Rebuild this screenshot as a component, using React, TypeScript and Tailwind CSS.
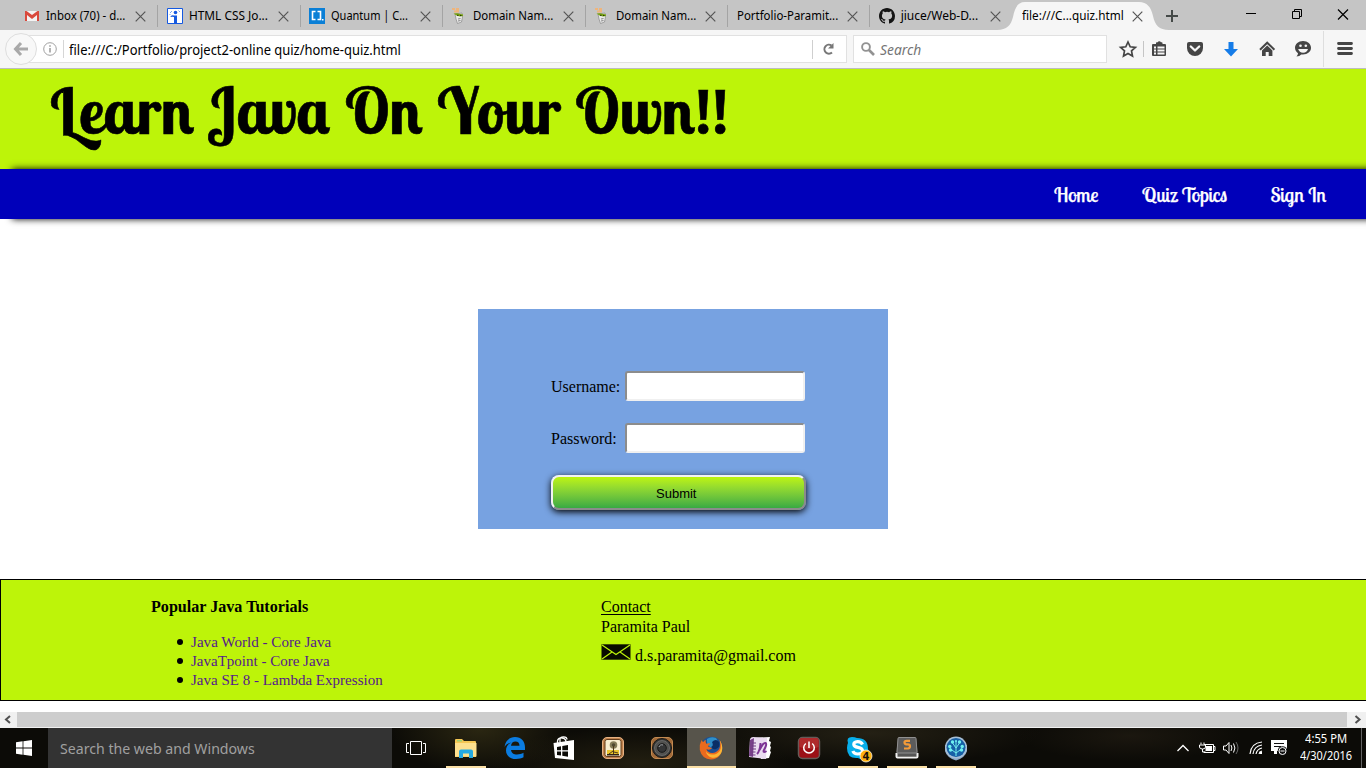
import { useLayoutEffect, useRef, useState } from "react";
import type { ReactNode } from "react";

/* Text squeezed or stretched to a set width. */
function Fit({ w, className = "", children }: { w: number; className?: string; children: ReactNode }) {
  const ref = useRef<HTMLSpanElement>(null);
  const [scale, setScale] = useState(1);
  useLayoutEffect(() => {
    if (ref.current) setScale(w / ref.current.offsetWidth);
  }, [w]);
  return (
    <span className="block shrink-0" style={{ width: w }}>
      <span
        ref={ref}
        className={`inline-block whitespace-nowrap ${className}`}
        style={{ transformOrigin: "0 75%", transform: `scaleX(${scale})` }}
      >
        {children}
      </span>
    </span>
  );
}

function Close({ className = "" }: { className?: string }) {
  return (
    <svg width="11" height="11" viewBox="0 0 11 11" className={`shrink-0 ${className}`}>
      <path d="M.7.7l9.6 9.6M10.3.7L.7 10.3" stroke="#555" strokeWidth="1.2" fill="none" />
    </svg>
  );
}

const Gmail = () => (
  <svg width="16" height="16" viewBox="0 0 16 16">
    <path d="M1 3h14v10H1z" fill="#f3f3f3" />
    <path d="M1 13V3.5L8 9l7-5.500V13h-2V7L8 11 3 7v6z" fill="#d94a3d" />
    <path d="M1 3h1.500L8 7l5.500-4H15v1.500L8 10 1 4.500z" fill="#d94a3d" />
  </svg>
);
const InfoFav = () => (
  <svg width="16" height="16" viewBox="0 0 16 16">
    <path d="M.5.5h15v15H.5z" fill="#fff" stroke="#1559e0" />
    <circle cx="8.500" cy="4.500" r="1.800" fill="#1559e0" />
    <path d="M3.500 8.500Q5 6.500 7 7.500h3V15H7V9Q5.500 8.500 3.500 9z" fill="#1559e0" />
    <path d="M3 5l2-2M11.500 2.500l1.500 1.500M2.500 7l1-1" stroke="#7aa6f5" />
  </svg>
);
const Brackets = () => (
  <svg width="16" height="16" viewBox="0 0 16 16">
    <path d="M0 0h16v16H0z" fill="#0a7fd6" />
    <path d="M6.500 3.500h-3v8h3M8.500 3.500h3v8h-3" fill="none" stroke="#fff" strokeWidth="1.600" />
    <path d="M13 11h1.500v1.500H13z" fill="#fff" />
  </svg>
);
const Chef = () => (
  <svg width="16" height="16" viewBox="0 0 16 16">
    <path d="M1 0h3v2H1zM5 0h3v3H5zM3 2.500h5v2H3z" fill="#efb57c" />
    <path d="M4 6l7-1 .5 4-1 5-4 1.500L5 11z" fill="#e9e9e9" stroke="#888" strokeWidth=".7" />
    <path d="M2.500 5.500L6 5.200l6 1.300v1.600l-3 .5-3.500-1z" fill="#79a511" />
    <path d="M6 7.300h1.500M9 7.500h1.500" stroke="#263805" />
    <path d="M7 11l2.500-.5M7 13l2.500-.5" stroke="#888" />
  </svg>
);
const Github = () => (
  <svg width="16" height="16" viewBox="0 0 16 16">
    <path
      fill="#141414"
      d="M8 0C3.580 0 0 3.580 0 8c0 3.540 2.290 6.530 5.470 7.590.4.070.55-.17.55-.38 0-.19-.01-.82-.01-1.490-2.010.37-2.530-.49-2.690-.94-.09-.23-.48-.94-.82-1.130-.28-.15-.68-.52-.01-.53.63-.01 1.080.58 1.230.82.72 1.210 1.870.87 2.330.66.070-.52.28-.87.51-1.070-1.780-.2-3.640-.89-3.640-3.950 0-.87.31-1.590.82-2.150-.08-.2-.36-1.020.08-2.120 0 0 .67-.21 2.200.82a7.600 7.600 0 0 1 4 0c1.530-1.040 2.200-.82 2.200-.82.44 1.100.16 1.920.08 2.120.51.56.82 1.270.82 2.150 0 3.070-1.870 3.750-3.650 3.950.29.25.54.73.54 1.480 0 1.070-.01 1.930-.01 2.200 0 .21.15.46.55.38A8 8 0 0 0 16 8c0-4.420-3.580-8-8-8z"
    />
  </svg>
);

const tabs: { icon: ReactNode; text: string; w: number }[] = [
  { icon: <Gmail />, text: "Inbox (70) - d...", w: 79 },
  { icon: <InfoFav />, text: "HTML CSS Jo...", w: 79 },
  { icon: <Brackets />, text: "Quantum | C...", w: 77 },
  { icon: <Chef />, text: "Domain Nam...", w: 80 },
  { icon: <Chef />, text: "Domain Nam...", w: 80 },
  { icon: null, text: "Portfolio-Paramit...", w: 101 },
  { icon: <Github />, text: "jiuce/Web-D...", w: 77 },
];

function TabBar() {
  return (
    <div className="flex h-[30px] bg-[#c5c5c5] pl-[15px] text-[12px] text-black">
      {tabs.map((t, i) => (
        <div key={i} className="flex w-[142.4px] shrink-0 items-center">
          <div className={t.icon ? "ml-[9.3px] mr-[6px] mt-[2px] w-4 shrink-0" : "ml-[10px]"}>{t.icon}</div>
          <Fit w={t.w} className="mt-px leading-[30px]">{t.text}</Fit>
          <Close className="ml-auto mr-[11px] mt-[2px]" />
          {i < 6 && <div className="-mr-px mt-[2px] h-[22px] w-px bg-[#a4a4a4]" />}
        </div>
      ))}
      <div className="-ml-[15px] grid w-[173px] shrink-0">
        <svg width="173" height="30" className="col-start-1 row-start-1">
          <path d="M0 30C10 30 14 25 16 17C18 7 21 2 28 2H142C150 2 154 7 156 16C158 25 162 30 172 30z" fill="#f6f6f6" />
        </svg>
        <div className="z-10 col-start-1 row-start-1 flex items-center pl-[25px]">
          <Fit w={102} className="mt-px leading-[30px]">file:///C...quiz.html</Fit>
          <Close className="ml-[8px] mt-px" />
        </div>
      </div>
      <svg width="196" height="30" viewBox="1170 0 196 30" overflow="visible" className="-ml-[1px]">
        <path d="M1167 16h12M1173 10v12" stroke="#454a48" strokeWidth="2" />
        <path d="M1247 13.500h10" stroke="#000" />
        <path d="M1293.500 11.500h7v7h-7zM1295.500 11.500v-2h7v7h-2" stroke="#000" fill="none" />
        <path d="M1339 9.500l10 10M1349 9.500l-10 10" stroke="#000" strokeWidth="1.200" />
      </svg>
    </div>
  );
}

function Toolbar() {
  return (
    <div className="flex h-[39px] items-start border-b border-[#bdbdbd] bg-[#f6f6f6] pl-[5px] pt-[3px]">
      <div className="z-10 flex size-8 shrink-0 items-center justify-center rounded-full border border-[#dedede] bg-[#f8f8f8]">
        <svg width="16" height="16" viewBox="0 0 16 16">
          <path d="M8 2L2.500 8 8 14M3 8h12" stroke="#a9a9a9" strokeWidth="3" fill="none" />
        </svg>
      </div>
      <div className="-ml-[16px] mt-[2px] flex h-[28px] w-[826px] shrink-0 items-center border border-[#e1e1e1] bg-white pl-[21px]">
        <svg width="14" height="14" viewBox="0 0 14 14">
          <circle cx="7" cy="7" r="6.300" fill="none" stroke="#a0a0a0" />
          <path d="M7 6v4.500M7 3.300v1.400" stroke="#929292" strokeWidth="1.400" />
        </svg>
        <div className="ml-[6px] mr-[5px] h-[18px] w-px bg-[#d6d6d6]" />
        <Fit w={332} className="mt-[2px] text-[14px] leading-7 text-black">file:///C:/Portfolio/project2-online quiz/home-quiz.html</Fit>
        <div className="ml-auto h-[19px] w-px bg-[#cfcfcf]" />
        <svg width="33" height="20" viewBox="1 0 33 20">
          <path d="M20 13.500A4.500 4.500 0 1 1 19.500 6.500" stroke="#777" strokeWidth="2" fill="none" />
          <path d="M21.500 4v5.500H16z" fill="#777" />
        </svg>
      </div>
      <div className="ml-[6px] mt-[2px] flex h-[28px] w-[254px] shrink-0 items-center border border-[#e1e1e1] bg-white pl-[7px]">
        <svg width="14" height="14" viewBox="0 0 14 14" className="-mt-px">
          <circle cx="5" cy="5" r="3.900" fill="none" stroke="#929292" strokeWidth="1.900" />
          <path d="M8 8l5 5" stroke="#929292" strokeWidth="2.600" />
        </svg>
        <Fit w={41} className="ml-[5px] mt-[2px] text-[13.500px] italic leading-7 text-[#757575]">Search</Fit>
      </div>
      <svg width="259" height="38" viewBox="1107 30 259 38" className="-mt-[3px] shrink-0">
        <path d="M1128 42l2.200 4.800 5.200.6-3.900 3.500 1 5.200-4.500-2.600-4.500 2.600 1-5.200-3.900-3.500 5.200-.6z" fill="none" stroke="#454545" strokeWidth="1.700" />
        <path d="M1143.500 41v16" stroke="#c5c5c5" />
        <path d="M1153 44h3v-1q0-.7.7-.7h1a1.700 1.700 0 0 1 3.200 0h.9q.7 0 .7.700v1h2.500q1 0 1 1v10q0 1-1 1h-12q-1 0-1-1V45q0-1 1-1z" fill="#454545" />
        <path d="M1154 46.500h2v2h-2zM1157.500 46.500h7v2h-7zM1154 49.500h2v2h-2zM1157.500 49.500h7v2h-7zM1154 52.500h2v2h-2zM1157.500 52.500h7v2h-7z" fill="#f6f6f6" />
        <path d="M1189 42h12q2 0 2 2v4a8 8 0 0 1-16 0v-4q0-2 2-2z" fill="#454545" />
        <path d="M1190.800 46.500l4.200 4 4.200-4" fill="none" stroke="#f6f6f6" strokeWidth="2.300" strokeLinecap="round" strokeLinejoin="round" />
        <path d="M1228.500 42h5v7h4.500l-7 7.500-7-7.500h4.500z" fill="#157ce8" />
        <path d="M1260 49.700l7.200-7 7.200 7" fill="none" stroke="#454545" strokeWidth="2" />
        <path d="M1262 50.500l5.200-5 5.200 5V56h-3.700v-4h-3v4H1262z" fill="#454545" />
        <path d="M1303 41c4.800 0 8 3 8 6.800s-3.400 6.700-8 6.700l-1.700-.1q-1.800 1.900-4.800 2 1.600-1.600 1.500-3.200c-2-1.300-3-3.200-3-5.400 0-3.800 3.400-6.800 8-6.800z" fill="#454545" />
        <path d="M1298.200 49h9.800q-1 3.700-4.900 3.700t-4.900-3.700z" fill="#f6f6f6" />
        <circle cx="1300.500" cy="45.800" r="1.300" fill="#f6f6f6" />
        <circle cx="1305.800" cy="45.800" r="1.300" fill="#f6f6f6" />
        <path d="M1323.500 31v36" stroke="#dedede" />
        <path d="M1338.500 43.500h13M1338.500 48.500h13M1338.500 53.500h13" stroke="#454545" strokeWidth="2.800" strokeLinecap="round" />
      </svg>
    </div>
  );
}

function Header() {
  return (
    <header className="h-[100px] bg-[#bdf409] pl-[50px]">
      <h1 className="text-[64px] font-bold leading-[82px] text-black [-webkit-text-stroke:0.6px_#000] [font-family:'Lobster_Two',Lobster,serif] [word-spacing:1px]">
        <Fit w={679}>Learn Java On Your Own!!</Fit>
      </h1>
    </header>
  );
}

function Nav() {
  return (
    <nav className="z-10 flex h-[50px] justify-end gap-[43.5px] bg-[#0000ba] pr-[39.5px] text-[20px] leading-[52px] text-white shadow-[12px_0_7px_#000] [-webkit-text-stroke:0.25px_#fff] [font-family:'Lobster_Two',Lobster,serif]">
      <Fit w={44.5}>Home</Fit>
      <Fit w={85}>Quiz Topics</Fit>
      <Fit w={56}>Sign In</Fit>
    </nav>
  );
}

function Field({ label, w }: { label: string; w: number }) {
  return (
    <label className="mb-[22px] flex h-[30px]">
      <span className="w-[74px] shrink-0">
        <Fit w={w} className="leading-[32px]">{label}</Fit>
      </span>
      <input className="h-[30px] w-[180px] rounded-[3px] border-2 border-b-[#f0f0f0] border-l-[#8c8c8c] border-r-[#f0f0f0] border-t-[#8c8c8c] bg-white outline-none" />
    </label>
  );
}

function Login() {
  return (
    <form className="mx-auto mt-[90px] h-[220px] w-[410px] shrink-0 bg-[#77a2e1] pl-[73px] pt-[62px] text-[16px] text-black [font-family:'Liberation_Serif',serif]">
      <Field label="Username:" w={69} />
      <Field label="Password:" w={66} />
      <button
        type="button"
        className="flex h-[35px] w-[255px] items-center justify-center rounded-[8px] border-2 border-b-[#8b8b8b] border-l-[#f2f2f2] border-r-[#8b8b8b] border-t-[#f2f2f2] bg-linear-to-b from-[#bdf409] to-[#37aa42] pr-[6px] pt-[2px] text-[13.33px] shadow-[0_2px_7px_#000] [font-family:'Liberation_Sans',sans-serif]"
      >
        <Fit w={40}>Submit</Fit>
      </button>
    </form>
  );
}

function Footer() {
  const links: [string, number][] = [["Java World - Core Java", 140], ["JavaTpoint - Core Java", 139], ["Java SE 8 - Lambda Expression", 191.5]];
  return (
    <footer className="mt-[50px] flex h-[122px] shrink-0 border-y border-l border-black bg-[#bdf409] pl-[150px] pt-[17px] text-[16px] leading-5 text-black [font-family:'Liberation_Serif',serif]">
      <section className="w-[450px]">
        <h2 className="font-bold"><Fit w={157}>Popular Java Tutorials</Fit></h2>
        <ul className="mt-[15px] text-[#551a8b]">
          {links.map(([t, w]) => (
            <li key={t} className="flex h-[19px] items-center">
              <span className="ml-[26px] mr-[8px] size-[6px] rounded-full bg-black" />
              <Fit w={w} className="text-[15px] leading-[19px]">{t}</Fit>
            </li>
          ))}
        </ul>
      </section>
      <section>
        <div><Fit w={50} className="underline decoration-1 underline-offset-2">Contact</Fit></div>
        <div><Fit w={89}>Paramita Paul</Fit></div>
        <div className="flex pt-[7px]">
          <svg width="30" height="16" viewBox="0 0 30 16" className="mr-[4px]">
            <path d="M.5.300h29v15.400H.5z" fill="#080c00" />
            <path d="M1 1l14 9.500L29 1M1 15l10-7M29 15L19 8" fill="none" stroke="#bdf409" strokeWidth="1.200" />
          </svg>
          <Fit w={161} className="mt-[2px]">d.s.paramita@gmail.com</Fit>
        </div>
      </section>
    </footer>
  );
}

function Scrollbar() {
  return (
    <div className="flex h-[16px] shrink-0 items-stretch justify-between border-b border-[#f0f0f0] bg-[#f0f0f0]">
      <svg width="17" height="15"><path d="M10 4L6 7.500l4 3.500" fill="none" stroke="#505050" strokeWidth="2" /></svg>
      <div className="flex-1 bg-[#cdcdcd]" />
      <svg width="19" height="15"><path d="M8.500 4l4 3.500-4 3.500" fill="none" stroke="#505050" strokeWidth="2" /></svg>
    </div>
  );
}

const apps: { on?: boolean; active?: boolean; art: ReactNode }[] = [
  {
    on: true,
    art: (
      <>
        <path d="M1 4q0-1 1-1h6l2 2h11q1 0 1 1v15H1z" fill="#f5c754" />
        <path d="M1 7h21.500v13.500H1z" fill="#fde08e" />
        <path d="M3 4h5v1.500H3z" fill="#9ed173" />
        <path d="M5 22v-6.500q0-2 2-2h10q2 0 2 2V22h-4v-4.500H9V22z" fill="#25a9e0" />
      </>
    ),
  },
  {
    art: (
      <path d="M1.500 11C2.500 4.500 6.500 1 12 1c6.500 0 10 4.500 10 10.500V14H8c.3 3.200 3 4.500 6 4.500 2.500 0 4.700-.6 6.500-1.700v4.500C18.500 22.400 16 23 13 23 7 23 3 19.500 3 14.500c0-3.800 2-6.600 5.500-8C5.500 7 3 8.500 1.500 11zM8 9.800h8.500C16.500 7 15 5.500 12.500 5.500S8.300 7 8 9.800z" fill="#0b7ce0" />
    ),
  },
  {
    art: (
      <>
        <path d="M8 6V3.500Q8 .8 11.500.8T15 3.500M5.500 7V5Q6 1.500 10 2t4 4" fill="none" stroke="#fff" strokeWidth="1.300" />
        <path d="M1.500 7L22 4v20L3 22z" fill="#fff" />
        <path d="M5 11l4-.7v4H5zM10.300 10l5.700-1v5.300h-5.700zM5 15.500h4v4l-4-.6zM10.300 15.500H16v5.300l-5.700-1z" fill="#0a0a06" />
      </>
    ),
  },
  {
    art: (
      <>
        <rect x="1.500" y="1.500" width="21" height="21" rx="4.500" fill="#bd814c" stroke="#e7b284" />
        <rect x="4" y="3.500" width="16" height="17" rx="2" fill="#f8efd1" stroke="#633c1d" />
        <path d="M6 14h12v5H6z" fill="#e9c52b" />
        <circle cx="12.500" cy="9" r="3.800" fill="#857d58" />
        <circle cx="12.500" cy="9" r="1.800" fill="#4f4a30" />
        <path d="M12.500 10v9M8 18l4-3M17 17l-4-1" stroke="#4e3919" strokeWidth="1" />
        <path d="M6 18h12v1.500H6z" fill="#322312" />
      </>
    ),
  },
  {
    art: (
      <>
        <rect x="1.500" y="1.500" width="21" height="21" rx="4.500" fill="#a26a38" stroke="#c28a52" />
        <circle cx="12" cy="12" r="9.500" fill="#353533" stroke="#1a1917" />
        <circle cx="12" cy="12" r="7.500" fill="#51514f" stroke="#777" strokeWidth=".7" />
        <circle cx="12" cy="12" r="4.300" fill="#343536" stroke="#181818" />
        <path d="M9 11a3 3 0 0 1 4-2" stroke="#a2a6aa" fill="none" />
      </>
    ),
  },
  {
    on: true,
    active: true,
    art: (
      <>
        <circle cx="12.500" cy="11.500" r="10.800" fill="#1c4f93" />
        <path d="M8 3q4-3 9-1 3 4 1 8-3 4-7 1-4-3-3-8z" fill="#2f8fc9" />
        <path d="M13 6q4-4 7 0 2 5-3 7-3 1-5-2 3-1 1-5z" fill="#0a2f66" />
        <path d="M2.500 4Q0 9 .8 14 3 23 12 23.500c7 0 11-5.500 11.200-11.500.1-3-1-6-2.700-8 1.500 5 .5 10-3.500 12-4 2-9 .5-9.500-3 2 1.500 4.500.5 5.500-1-2-.3-2.500-1.500-4-1.500.3-1.500 1.500-2 2.500-2.800-2-.7-3-.2-4 0-.8-1-1-2.500-.7-4Q5 4.500 4.300 6 3 5.500 2.500 4z" fill="#ea6a1e" />
        <path d="M20.500 4c3 6 1.500 12-3.500 14-5 1.500-9 0-10-3 0 4 4 7 8 6.800 6-.8 8.700-5.800 8.200-10.800-.3-3-1.200-5-2.700-7z" fill="#fbb634" />
      </>
    ),
  },
  {
    art: (
      <>
        <path d="M5 2l17-1-1 4 2 1-1 4 1 1-1 4 1 1-2 6-8 1z" fill="#fff" />
        <path d="M2 3q1-2 3-2l14 1-1 21-17-2z" fill="#eadcf0" />
        <path d="M2 4l4-2-1 19-4-1z" fill="#78408a" />
        <path d="M4 7h4M4 10h4M4 13h4M3.500 16h4M3.500 19h4" stroke="#6d3a80" />
        <path d="M9 18q3-3 3.500-11M11.500 14q4-8 6-7t-2 8q0 2 3 0" fill="none" stroke="#7d3595" strokeWidth="2" />
      </>
    ),
  },
  {
    art: (
      <>
        <rect x="1.500" y="1.500" width="21" height="21" rx="4" fill="#9c1016" stroke="#655b57" strokeWidth="1.500" />
        <path d="M2.500 4q0-2 2-2h15q2 0 2 2v7q-9 4-19 0z" fill="#ae2a2c" />
        <path d="M8.800 7.500a5.300 5.300 0 1 0 6.400 0M12 5.500v6.500" fill="none" stroke="#fff" strokeWidth="1.500" />
      </>
    ),
  },
  {
    on: true,
    art: (
      <>
        <path d="M2 7Q0 1 6 1q3 0 5 1 11 0 11 11 3 10-6 10-3 0-4-1Q1 23 1 12q0-3 1-5z" fill="#08aeea" />
        <path d="M16.500 8.500Q15 5.500 11.500 5.700 7.500 6 7.800 8.500 8 10.700 12 11.300q4.500.7 4.500 3.500 0 3-4.700 3.200Q8 18 6.800 15" fill="none" stroke="#fff" strokeWidth="3.200" />
        <circle cx="20" cy="20" r="6" fill="#ffb10f" stroke="#fff" strokeWidth=".7" />
        <text x="20" y="23.500" textAnchor="middle" fontSize="10" fontWeight="700" fontFamily="DejaVu Sans" fill="#17100a">4</text>
      </>
    ),
  },
  {
    on: true,
    art: (
      <>
        <path d="M3 2h18l2 18H1z" fill="#555" />
        <path d="M1.500 17v3.500q0 1 1 1h19q1 0 1-1V17" fill="none" stroke="#f1f1f1" strokeWidth="2" />
        <path d="M4 1.500h16q1 0 1 1L22 16q0 1-1 1H3q-1 0-1-1l1-13.500q0-1 1-1z" fill="#5c5c5c" stroke="#909090" />
        <path d="M15 4.800h-3.500q-2 0-2 1.700t2 1.800H13q2 0 2 2t-2 2.200H9" fill="none" stroke="#f39b38" strokeWidth="2.200" />
      </>
    ),
  },
  {
    on: true,
    art: (
      <>
        <path d="M1 9h22v6q-2 7-11 9.500Q3 22 1 15z" fill="#8ca8c5" />
        <circle cx="12" cy="11.500" r="11" fill="#a7bfd6" />
        <circle cx="12" cy="11.500" r="9.500" fill="#1660a6" />
        <path d="M12 20V5M12 17L6 12.500M12 17l6-4.500M12 12L8.500 7M12 12l3.500-5" stroke="#73efee" strokeWidth="1" fill="none" />
        <g fill="#6ff0f0"><circle cx="12" cy="5" r="1" /><circle cx="8.500" cy="6" r="1.700" /><circle cx="15.500" cy="6" r="1.700" /><circle cx="5.800" cy="10.500" r="1.700" /><circle cx="18.200" cy="10.500" r="1.700" /><circle cx="6.500" cy="14" r="1.700" /><circle cx="17.500" cy="14" r="1.700" /></g>
      </>
    ),
  },
];

function Taskbar() {
  return (
    <div className="flex h-[40px] shrink-0 bg-[#0c0b07] bg-[radial-gradient(ellipse_90px_45px_at_480px_0px,#2b2712,transparent),radial-gradient(ellipse_150px_35px_at_640px_35px,#221e10,transparent),radial-gradient(ellipse_170px_32px_at_870px_5px,#242014,transparent),radial-gradient(ellipse_110px_25px_at_1130px_8px,#1b170f,transparent)]">
      <div className="flex w-12 shrink-0 items-center justify-center">
        <svg width="16" height="16" viewBox="0 0 16 16"><path d="M0 2.300L6.600 1.300V7.500H0zM7.400 1.200L16 0v7.500H7.400zM0 8.500h6.600v6.200L0 13.700zM7.400 8.500H16V16l-8.600-1.200z" fill="#fff" /></svg>
      </div>
      <div className="h-10 w-[344px] shrink-0 bg-[#333] pl-3 text-[15px] leading-[41px] text-[#a0a0a0]">
        <Fit w={195}>Search the web and Windows</Fit>
      </div>
      <div className="flex w-[49.500px] shrink-0 items-center justify-center pr-[1.5px]">
        <svg width="20" height="16" viewBox="0 0 20 16"><path d="M4.500 1.500h11v13h-11zM3 3.500H.5v9H3M17 3.500h2.500v9H17" fill="none" stroke="#fff" /></svg>
      </div>
      {apps.map((a, i) => (
        <div key={i} className={`flex h-10 w-[49px] shrink-0 flex-col items-center justify-end ${a.active ? "bg-[#57544b]" : ""}`}>
          <svg width="24" height="24" viewBox="0 0 24 24" overflow="visible">{a.art}</svg>
          <div className={`mt-[6px] h-[2px] ${a.active ? "w-full" : "w-[40px]"} ${a.on ? "bg-[#fbe0a6]" : ""}`} />
        </div>
      ))}
      <svg width="120" height="40" viewBox="1175 0 120 40" className="ml-auto mr-[5px] shrink-0" fill="none" stroke="#fff">
        <path d="M1177.500 23l5.500-5.500 5.500 5.500" strokeWidth="1.300" />
        <path d="M1204 16.500h9.500v8h-9.500v-1M1214 18.500h1v4h-1" />
        <path d="M1205.500 18h6.500v5h-6.500z" fill="#fff" stroke="none" />
        <path d="M1199.500 17h6v2q0 2-3 2t-3-2zM1201 14.500v2M1204 14.500v2M1202.500 21v3h3" />
        <path d="M1223.500 18h2.500l3-3.500v11l-3-3.500h-2.500z" />
        <path d="M1231 17q1.800 3 0 6M1233.500 15.500q2.800 4.500 0 9" />
        <path d="M1236 14q4 6 0 12" stroke="#656565" />
        <path d="M1250 26q1-11 12-12M1253 26q1-8 9-9M1256 26q1-5 6-6M1259 26q.5-2.500 3-3" strokeWidth="1.200" />
        <path d="M1259.500 23.500h2.500V26h-2.500z" fill="#fff" stroke="none" />
        <path d="M1271 12h16v11h-10v3h-3v-3h-3z" fill="#fff" stroke="none" />
        <path d="M1274 15.500h10M1274 18.500h7" stroke="#111" />
        <circle cx="1282.500" cy="23" r="4.800" fill="#111" stroke="none" />
        <circle cx="1282.500" cy="23" r="3.500" />
        <path d="M1280.500 23h4" />
      </svg>
      <div className="flex w-[61px] shrink-0 flex-col items-start pt-[2px] text-[12px] leading-[17px] text-white">
        <div className="pl-[5px]"><Fit w={42}>4:55 PM</Fit></div>
        <Fit w={52}>4/30/2016</Fit>
      </div>
      <div className="w-[5px] border-l border-[#626262]" />
    </div>
  );
}

export default function App() {
  return (
    <div className="flex h-[768px] w-[1366px] flex-col overflow-hidden bg-white [font-family:'Noto_Sans',sans-serif]">
      <TabBar />
      <Toolbar />
      <main className="flex h-[643px] shrink-0 flex-col overflow-hidden">
        <Header />
        <Nav />
        <Login />
        <Footer />
      </main>
      <Scrollbar />
      <Taskbar />
    </div>
  );
}
